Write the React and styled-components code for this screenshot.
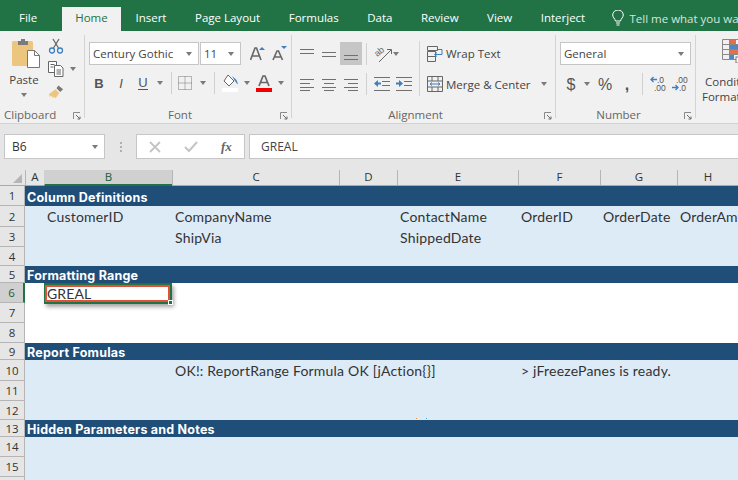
import styled, { createGlobalStyle } from "styled-components";

const GlobalStyle = createGlobalStyle`
  html, body {
    margin: 0;
    padding: 0;
    height: 100%;
    overflow: hidden;
    background: #e6e6e6;
    font-family: "Open Sans", "Liberation Sans", sans-serif;
  }
  * { box-sizing: border-box; }
`;

const Page = styled.div`
  width: 738px;
  height: 480px;
  overflow: hidden;
`;

const TabBar = styled.div`
  height: 31px;
  background: #217346;
  display: flex;
  align-items: flex-end;
  padding-left: 5px;
  white-space: nowrap;
`;

const Tab = styled.div`
  height: 24px;
  padding: 0 ${(p) => p.$pad || 14.25}px;
  line-height: 22px;
  font-size: 11.5px;
  color: ${(p) => (p.$active ? "#217346" : "#fff")};
  background: ${(p) => (p.$active ? "#f1f1f1" : "transparent")};
  margin-left: ${(p) => p.$ml || 0}px;
`;

const TellMe = styled.div`
  display: flex;
  align-items: center;
  gap: 5px;
  height: 24px;
  margin-left: 13px;
  font-size: 11.5px;
  color: #d5e6dc;
  padding-bottom: 2px;
`;

const Ribbon = styled.div`
  height: 93px;
  background: #f1f1f1;
  border-bottom: 1px solid #d2d2d2;
  display: flex;
  padding: 4px 0 5px;
  overflow: hidden;
`;

const Group = styled.div`
  position: relative;
  flex: none;
  width: ${(p) => p.$w}px;
  padding-left: ${(p) => (p.$last ? 0 : 4)}px;
  display: flex;
  flex-direction: column;
  border-right: ${(p) => (p.$last ? "none" : "1px solid #d4d4d4")};
`;

const GroupBody = styled.div`
  display: flex;
  margin-top: 7px;
`;

const GroupLabel = styled.div`
  margin-top: auto;
  margin-bottom: -5px;
  height: 16px;
  line-height: 16px;
  text-align: center;
  font-size: 11.5px;
  color: #666;
  padding-right: ${(p) => p.$pr || 0}px;
`;

const Launcher = styled.svg`
  position: absolute;
  right: 3px;
  bottom: -2px;
  width: 8px;
  height: 8px;
`;

const Column = styled.div`
  display: flex;
  flex-direction: column;
  margin-top: ${(p) => p.$mt || 0}px;
`;

const ToolRow = styled.div`
  display: flex;
  align-items: center;
  height: ${(p) => p.$h || 23}px;
  margin-bottom: ${(p) => p.$mb || 0}px;
`;

const Tool = styled.div`
  flex: none;
  width: ${(p) => p.$w}px;
  height: ${(p) => p.$h || 20}px;
  margin-left: ${(p) => p.$ml || 0}px;
  display: flex;
  align-items: center;
  justify-content: center;
  background: ${(p) => (p.$on ? "#c6c6c6" : "transparent")};
`;

const Caret = styled.span`
  display: block;
  flex: none;
  width: 0;
  height: 0;
  margin-top: ${(p) => p.$mt || 0}px;
  border-left: 3.5px solid transparent;
  border-right: 3.5px solid transparent;
  border-top: 4px solid #7a7a7a;
`;

const ToolSep = styled.div`
  flex: none;
  width: 1px;
  height: 22px;
  margin-left: ${(p) => p.$ml || 0}px;
  background: #d0d0d0;
`;

const ColumnSep = styled.div`
  flex: none;
  width: 1px;
  height: 55px;
  margin: -1px 7px 0 ${(p) => p.$ml || 0}px;
  background: #d4d4d4;
`;

const Combo = styled.div`
  flex: none;
  width: ${(p) => p.$w}px;
  height: 23px;
  margin-left: ${(p) => p.$ml || 0}px;
  background: #fff;
  border: 1px solid #c6c6c6;
  display: flex;
  align-items: center;
  justify-content: space-between;
  padding: 0 6px 0 3px;
  font-size: 11.5px;
  color: #444;
`;

const WrapLabel = styled.span`
  font-size: 11.5px;
  color: #444;
  margin-left: 3px;
  white-space: nowrap;
`;

const BigButton = styled.div`
  flex: none;
  width: 40px;
  display: flex;
  flex-direction: column;
  align-items: center;
  font-size: 11.5px;
  color: #444;
  line-height: 16px;
  svg {
    margin: -4px 0 4px 4px;
  }
`;

const CondLine = styled.div`
  font-size: 11.5px;
  line-height: 15px;
  color: #444;
  white-space: nowrap;
  margin-left: ${(p) => p.$ml}px;
  margin-top: ${(p) => p.$mt || 0}px;
`;

const FormulaRow = styled.div`
  height: 46px;
  display: flex;
  align-items: flex-start;
  padding-top: 10px;
  background: #e6e6e6;
`;

const NameBox = styled.div`
  width: 101px;
  height: 25px;
  margin-left: 4px;
  background: #fff;
  border: 1px solid #c6c6c6;
  display: flex;
  align-items: center;
  justify-content: space-between;
  padding: 0 6px 0 7px;
  font-size: 12px;
  color: #333;
`;

const Dots = styled.div`
  width: 31px;
  height: 25px;
  display: flex;
  flex-direction: column;
  align-items: center;
  justify-content: center;
  gap: 2px;
  span {
    width: 2px;
    height: 2px;
    background: #b0b0b0;
  }
`;

const FxBox = styled.div`
  width: 109px;
  height: 25px;
  background: #fff;
  border: 1px solid #c6c6c6;
  display: flex;
  align-items: center;
  padding-left: 12px;
  gap: 23px;
`;

const FxLabel = styled.span`
  font-family: "Liberation Serif", serif;
  font-style: italic;
  font-weight: 700;
  font-size: 13px;
  color: #666;
`;

const FormulaInput = styled.div`
  flex: 1;
  height: 25px;
  margin-left: 4px;
  background: #fff;
  border: 1px solid #c6c6c6;
  border-right: none;
  padding-left: 11px;
  line-height: 23px;
  font-size: 12px;
  color: #444;
`;

const Sheet = styled.div`
  display: grid;
  grid-template-columns: 25px 19px 128px 167px 58px 121px 82px 77px 61px;
  grid-template-rows: 16px 20px 21px 20px 19px 17px 20px 20px 20px 17px 21px 20px 19px 17px 20px 20px 20px;
  background: #fff;
`;

const Corner = styled.div`
  background: #e6e6e6;
  border-bottom: 1px solid #a9a9a9;
  display: flex;
  align-items: flex-end;
  justify-content: flex-end;
  padding: 0 3px 2px 0;
`;

const ColHead = styled.div`
  background: ${(p) => (p.$active ? "#d0d0d0" : "#e6e6e6")};
  border-left: 1px solid ${(p) => (p.$active ? "#d0d0d0" : "#b5b5b5")};
  border-bottom: ${(p) => (p.$active ? "2px solid #217346" : "1px solid #a9a9a9")};
  text-align: center;
  font-size: 11.5px;
  line-height: 14px;
  color: ${(p) => (p.$active ? "#1d5c3a" : "#333")};
`;

const RowHead = styled.div`
  grid-column: 1;
  background: ${(p) => (p.$active ? "#d0d0d0" : "#e6e6e6")};
  border-right: ${(p) => (p.$active ? "2px solid #217346" : "1px solid #b5b5b5")};
  border-bottom: 1px solid #b5b5b5;
  display: flex;
  align-items: center;
  justify-content: center;
  font-size: 11.5px;
  color: ${(p) => (p.$active ? "#1d5c3a" : "#333")};
`;

const Band = styled.div`
  grid-column: 2 / -1;
  background: #1f4e79;
  color: #fff;
  font-family: Inter, "DejaVu Sans", sans-serif;
  font-weight: 700;
  font-size: 12.5px;
  letter-spacing: 0.22px;
  line-height: ${(p) => p.$lh || 19}px;
  padding-left: 2px;
  white-space: nowrap;
`;

const BlueRow = styled.div`
  grid-column: 2 / -1;
  background: #ddebf7;
  display: grid;
  grid-template-columns: subgrid;
  position: relative;
`;

const WhiteRow = styled(BlueRow)`
  background: #fff;
`;

const Cell = styled.div`
  grid-column: ${(p) => p.$col};
  padding-left: 3px;
  font-family: Lato, Inter, sans-serif;
  font-size: 14px;
  letter-spacing: 0.2px;
  line-height: 22px;
  color: #333;
  white-space: nowrap;
`;

const SelectedCell = styled.div`
  grid-column: 2;
  position: relative;
  z-index: 2;
  height: 21px;
  border: 2px solid #217346;
  box-shadow: 2px 3px 4px rgba(0, 0, 0, 0.35);
  background: #fff;
`;

const SelectedInner = styled.div`
  height: 17px;
  border: 2px solid #e0503a;
  margin-left: -1px;
  font-family: Lato, Inter, sans-serif;
  font-size: 14px;
  letter-spacing: 0.1px;
  line-height: 14px;
  color: #333;
`;

const FillHandle = styled.span`
  position: absolute;
  right: -3px;
  bottom: -3px;
  width: 5px;
  height: 5px;
  background: #217346;
  border: 1px solid #fff;
`;

const Speck = styled.span`
  position: absolute;
  left: ${(p) => p.$x}px;
  bottom: 1px;
  width: 1px;
  height: 1px;
  background: ${(p) => p.$c};
`;

const Letter = styled.span`
  font-family: "Liberation Sans", sans-serif;
  font-size: ${(p) => p.$size || 13}px;
  color: #555;
  font-weight: ${(p) => (p.$bold ? 700 : 400)};
  font-style: ${(p) => (p.$italic ? "italic" : "normal")};
  border-bottom: ${(p) => (p.$under ? "1.5px solid #555" : "none")};
  line-height: 13px;
`;

/* ---- ribbon drawings ---- */

const LauncherIcon = () => (
  <Launcher viewBox="0 0 8 8" fill="none" stroke="#8a8a8a">
    <path d="M.5 7V.5H7" />
    <path d="M3 3l4 4M7 4.500V7H4.500" stroke="#6a6a6a" />
  </Launcher>
);

const PasteIcon = () => (
  <svg width="29" height="30" viewBox="0 0 29 30">
    <rect x="0" y="3" width="21" height="25" rx="1.5" fill="#ecc67f" />
    <path d="M6 3h3V1h4v2h3v4H6z" fill="#7b7b7b" />
    <path d="M15.500 12.500h7l5 5v12h-12z" fill="#fff" stroke="#777" />
    <path d="M22.500 12.500v5h5" fill="none" stroke="#777" />
  </svg>
);

const ScissorsIcon = () => (
  <svg width="16" height="16" viewBox="0 0 16 16" fill="none">
    <path d="M5 1l5.500 9M11 1l-5.500 9" stroke="#666" strokeWidth="1.3" />
    <circle cx="4" cy="12.500" r="2.500" stroke="#3f7fbf" strokeWidth="1.3" />
    <circle cx="12" cy="12.500" r="2.500" stroke="#3f7fbf" strokeWidth="1.3" />
  </svg>
);

const CopyIcon = () => (
  <svg width="16" height="16" viewBox="0 0 16 16" fill="#fff" stroke="#666">
    <path d="M.5.500h8v11h-8z" />
    <path d="M6.500 4.500h6l2.500 2.500v8.500h-8.500z" />
    <path d="M2.500 3.500h4M2.500 6h3M8.500 9h4.500M8.500 11h4.500M8.500 13h4.500" fill="none" />
  </svg>
);

const BrushIcon = () => (
  <svg width="17" height="16" viewBox="0 0 17 16">
    <path d="M11 1l5 4-3 3-4-4z" fill="#777" />
    <path d="M1 10l7-5 4 4-4 6-1.500-2-1.500 1.500L4 12l-2 1z" fill="#ecc67f" />
  </svg>
);

const GrowIcon = ({ small }) => (
  <svg width="15" height="15" viewBox="0 0 15 15">
    <path
      d={small ? "M1 14L5 5h1.500l4 9M3 11h5.500" : "M.5 14L5 2h1.500l4.500 12M2.500 10h6.500"}
      fill="none"
      stroke="#666"
      strokeWidth="1.6"
    />
    <path d={small ? "M9 0h6l-3 3z" : "M9 4l3-3 3 3z"} fill="#3f7fbf" />
  </svg>
);

const BordersIcon = () => (
  <svg width="14" height="14" viewBox="0 0 14 14" fill="none" stroke="#777" strokeDasharray="1 1">
    <path d="M.5.500h13v13H.5zM7 .5v13M.5 7h13" />
  </svg>
);

const FillIcon = () => (
  <svg width="17" height="18" viewBox="0 0 17 18">
    <path d="M6 1l6 6-5 5-5-5z" fill="#fff" stroke="#666" />
    <path d="M10 2l3.500 3c1.500 1.500 2.500 4 2 5.500L13 7z" fill="#3f7fbf" />
    <rect x="0" y="14" width="16" height="4" fill="#fff" />
  </svg>
);

const FontColorIcon = () => (
  <svg width="16" height="18" viewBox="0 0 16 18">
    <path d="M3 12L7 2h2l4 10M4.500 8.500h7" fill="none" stroke="#666" strokeWidth="1.7" />
    <rect x="0" y="14" width="16" height="4" fill="#f00000" />
  </svg>
);

const Lines = ({ rows, w = 14 }) => (
  <svg width={w} height="16" viewBox={`0 0 ${w} 16`} fill="none" stroke="#707070">
    {rows.map(([y, a, b]) => (
      <path key={y} d={`M${a} ${y}.5H${b}`} />
    ))}
  </svg>
);

const OrientationIcon = () => (
  <svg width="18" height="18" viewBox="0 0 18 18" fill="none" stroke="#666" overflow="visible">
    <text
      x="1"
      y="10"
      fontSize="9"
      fontFamily="Liberation Sans"
      fill="#666"
      stroke="none"
      transform="rotate(-40 5 8)"
    >
      ab
    </text>
    <path d="M5 17L17 5M13 4.500h4.500V9" />
  </svg>
);

const IndentIcon = ({ flip }) => (
  <svg width="16" height="14" viewBox="0 0 16 14">
    <path d="M0 .5h16M8 4.500h8M8 8.500h8M0 13.500h16" stroke="#707070" />
    <path d={flip ? "M0 5.500h3V3l4 3.500-4 3.500V7.500H0z" : "M7 5.500H4V3L0 6.500 4 10V7.500h3z"} fill="#3f7fbf" />
  </svg>
);

const WrapIcon = () => (
  <svg width="16" height="16" viewBox="0 0 16 16" fill="none">
    <path d="M.5.500h10v4H.5zM.5 5.500h8v5H.5zM.5 10.500h8v5H.5z" stroke="#666" />
    <path d="M11 3.500h4v5h-7M10 6.500l-2.500 2 2.500 2" stroke="#3f7fbf" />
  </svg>
);

const MergeIcon = () => (
  <svg width="16" height="16" viewBox="0 0 16 16" fill="none">
    <path d="M.5.500h15v15H.5zM.5 5h15M.5 11h15M5 .5V5M11 .5V5M5 11v4.500M11 11v4.500" stroke="#666" />
    <path d="M3 8h10M5 6.500L3 8l2 1.500M11 6.500L13 8l-2 1.500" stroke="#3f7fbf" />
  </svg>
);

const DecimalIcon = ({ more }) => (
  <svg width="16" height="16" viewBox="0 0 16 16">
    <text x={more ? 4 : 7} y="7" fontSize="8.5" fontFamily="Liberation Sans" fill="#555">
      {more ? ".00" : ".0"}
    </text>
    <text x={more ? 7 : 4} y="15" fontSize="8.5" fontFamily="Liberation Sans" fill="#555">
      {more ? ".0" : ".00"}
    </text>
    <path
      d={more ? "M0 11.500h6M3.500 9l2.500 2.500-2.500 2.500" : "M7 3.500H1M3.500 1L1 3.500 3.500 6"}
      stroke="#3f7fbf"
      strokeWidth="1.3"
      fill="none"
    />
  </svg>
);

const CondFormatIcon = () => (
  <svg width="16" height="24" viewBox="0 0 16 24">
    <path d="M.5.500h16v20H.5zM.5 5.500h16M.5 10.500h16M.5 15.500h16M7.500.5v20" fill="none" stroke="#888" />
    <rect x="8" y="1" width="6" height="4" fill="#e2704a" />
    <rect x="8" y="6" width="8" height="4" fill="#4f87c5" />
    <rect x="8" y="11" width="8" height="4" fill="#e2704a" />
    <rect x="8" y="16" width="4" height="4" fill="#4f87c5" />
    <rect x="14" y="18" width="3" height="6" fill="#fff" stroke="#777" />
  </svg>
);

const Bulb = () => (
  <svg width="12" height="16" viewBox="0 0 12 16" fill="none" stroke="#fff">
    <path d="M3.500 11C3 8.500.7 7.500.7 5a5.300 5 0 0 1 10.600 0C11.300 7.500 9 8.500 8.500 11zM4 13h4M4.500 15h3" />
  </svg>
);

const CrossIcon = () => (
  <svg width="12" height="12" viewBox="0 0 12 12" stroke="#c4c4c4" strokeWidth="1.8">
    <path d="M1 1l10 10M11 1L1 11" />
  </svg>
);

const CheckIcon = () => (
  <svg width="14" height="12" viewBox="0 0 14 12" fill="none" stroke="#c4c4c4" strokeWidth="2">
    <path d="M1 6l4 4 8-9" />
  </svg>
);

const tabs = ["Insert", "Page Layout", "Formulas", "Data", "Review", "View", "Interject"];
const columns = ["B", "C", "D", "E", "F", "G", "H"];

const Ribbons = () => (
  <Ribbon>
    <Group $w={85}>
      <GroupBody>
        <BigButton>
          <PasteIcon />
          <span>Paste</span>
          <Caret $mt={5} />
        </BigButton>
        <Column $mt={-8}>
          <ToolRow>
            <Tool $w={16} $ml={4}>
              <ScissorsIcon />
            </Tool>
          </ToolRow>
          <ToolRow>
            <Tool $w={16} $ml={4}>
              <CopyIcon />
            </Tool>
            <Tool $w={18}>
              <Caret />
            </Tool>
          </ToolRow>
          <ToolRow>
            <Tool $w={16} $ml={4}>
              <BrushIcon />
            </Tool>
          </ToolRow>
        </Column>
      </GroupBody>
      <GroupLabel $pr={28}>Clipboard</GroupLabel>
      <LauncherIcon />
    </Group>

    <Group $w={207}>
      <GroupBody>
        <Column>
          <ToolRow $mb={7}>
            <Combo $w={110}>
              Century Gothic
              <Caret />
            </Combo>
            <Combo $w={41} $ml={1}>
              11
              <Caret />
            </Combo>
            <Tool $w={16} $ml={8}>
              <GrowIcon />
            </Tool>
            <Tool $w={15} $ml={7}>
              <GrowIcon small />
            </Tool>
          </ToolRow>
          <ToolRow $h={22}>
            <Tool $w={20}>
              <Letter $bold>B</Letter>
            </Tool>
            <Tool $w={24}>
              <Letter $italic>I</Letter>
            </Tool>
            <Tool $w={20}>
              <Letter $under>U</Letter>
            </Tool>
            <Tool $w={14}>
              <Caret />
            </Tool>
            <ToolSep $ml={4} />
            <Tool $w={26}>
              <BordersIcon />
            </Tool>
            <Tool $w={10}>
              <Caret />
            </Tool>
            <ToolSep $ml={6} />
            <Tool $w={30}>
              <FillIcon />
            </Tool>
            <Tool $w={4}>
              <Caret />
            </Tool>
            <Tool $w={30}>
              <FontColorIcon />
            </Tool>
            <Tool $w={4}>
              <Caret />
            </Tool>
          </ToolRow>
        </Column>
      </GroupBody>
      <GroupLabel $pr={20}>Font</GroupLabel>
      <LauncherIcon />
    </Group>

    <Group $w={264}>
      <GroupBody>
        <Column>
          <ToolRow $mb={8}>
            <Tool $w={22}>
              <Lines rows={[[3, 0, 14], [7, 0, 14]]} />
            </Tool>
            <Tool $w={22}>
              <Lines rows={[[6, 0, 14], [10, 0, 14]]} />
            </Tool>
            <Tool $w={22} $h={23} $on>
              <Lines rows={[[9, 0, 14], [13, 0, 14]]} />
            </Tool>
            <ToolSep $ml={4} />
            <Tool $w={18} $ml={7}>
              <OrientationIcon />
            </Tool>
            <Tool $w={8}>
              <Caret />
            </Tool>
          </ToolRow>
          <ToolRow $h={22}>
            <Tool $w={22}>
              <Lines rows={[[3, 0, 14], [7, 0, 10], [11, 0, 14], [14, 0, 10]]} />
            </Tool>
            <Tool $w={22}>
              <Lines rows={[[3, 0, 14], [7, 2, 12], [11, 0, 14], [14, 2, 12]]} />
            </Tool>
            <Tool $w={22}>
              <Lines rows={[[3, 0, 14], [7, 4, 14], [11, 0, 14], [14, 4, 14]]} />
            </Tool>
            <ToolSep $ml={4} />
            <Tool $w={16} $ml={7}>
              <IndentIcon />
            </Tool>
            <Tool $w={16} $ml={6}>
              <IndentIcon flip />
            </Tool>
          </ToolRow>
        </Column>
        <ColumnSep $ml={7} />
        <Column>
          <ToolRow $mb={8}>
            <WrapIcon />
            <WrapLabel>Wrap Text</WrapLabel>
          </ToolRow>
          <ToolRow $h={22}>
            <MergeIcon />
            <WrapLabel>Merge &amp; Center</WrapLabel>
            <Tool $w={7} $ml={10}>
              <Caret />
            </Tool>
          </ToolRow>
        </Column>
      </GroupBody>
      <GroupLabel $pr={20}>Alignment</GroupLabel>
      <LauncherIcon />
    </Group>

    <Group $w={140}>
      <GroupBody>
        <Column>
          <ToolRow $mb={8}>
            <Combo $w={131}>
              General
              <Caret />
            </Combo>
          </ToolRow>
          <ToolRow $h={22}>
            <Tool $w={22}>
              <Letter $size={16}>$</Letter>
            </Tool>
            <Tool $w={10}>
              <Caret />
            </Tool>
            <Tool $w={26}>
              <Letter $size={16}>%</Letter>
            </Tool>
            <Tool $w={18}>
              <Letter $bold $size={16}>,</Letter>
            </Tool>
            <ToolSep $ml={6} />
            <Tool $w={16} $ml={7}>
              <DecimalIcon />
            </Tool>
            <Tool $w={16} $ml={6}>
              <DecimalIcon more />
            </Tool>
          </ToolRow>
        </Column>
      </GroupBody>
      <GroupLabel $pr={18}>Number</GroupLabel>
      <LauncherIcon />
    </Group>

    <Group $w={70} $last>
      <Column $mt={4}>
        <CondLine $ml={26}>
          <CondFormatIcon />
        </CondLine>
        <CondLine $ml={9} $mt={8}>
          Conditional
        </CondLine>
        <CondLine $ml={6}>Formatting</CondLine>
      </Column>
    </Group>
  </Ribbon>
);

const App = () => (
  <Page>
    <GlobalStyle />
    <TabBar>
      <Tab $pad={14}>File</Tab>
      <Tab $active $pad={13.5} $ml={10.5}>
        Home
      </Tab>
      {tabs.map((t) => (
        <Tab key={t}>{t}</Tab>
      ))}
      <TellMe>
        <Bulb />
        <span>Tell me what you want to do</span>
      </TellMe>
    </TabBar>

    <Ribbons />

    <FormulaRow>
      <NameBox>
        B6
        <Caret />
      </NameBox>
      <Dots>
        <span />
        <span />
        <span />
      </Dots>
      <FxBox>
        <CrossIcon />
        <CheckIcon />
        <FxLabel>fx</FxLabel>
      </FxBox>
      <FormulaInput>GREAL</FormulaInput>
    </FormulaRow>

    <Sheet>
      <Corner>
        <svg width="9" height="9" viewBox="0 0 9 9">
          <path d="M9 0v9H0z" fill="#b5b5b5" />
        </svg>
      </Corner>
      <ColHead>A</ColHead>
      {columns.map((c) => (
        <ColHead key={c} $active={c === "B"}>
          {c}
        </ColHead>
      ))}

      <RowHead>1</RowHead>
      <Band $lh={23}>Column Definitions</Band>

      <RowHead>2</RowHead>
      <BlueRow>
        <Cell $col={2}>CustomerID</Cell>
        <Cell $col={3}>CompanyName</Cell>
        <Cell $col={5}>ContactName</Cell>
        <Cell $col={6}>OrderID</Cell>
        <Cell $col={7}>OrderDate</Cell>
        <Cell $col={8}>OrderAmt</Cell>
      </BlueRow>

      <RowHead>3</RowHead>
      <BlueRow>
        <Cell $col={3}>ShipVia</Cell>
        <Cell $col={5}>ShippedDate</Cell>
      </BlueRow>

      <RowHead>4</RowHead>
      <BlueRow />

      <RowHead>5</RowHead>
      <Band>Formatting Range</Band>

      <RowHead $active>6</RowHead>
      <WhiteRow>
        <SelectedCell>
          <SelectedInner>GREAL</SelectedInner>
          <FillHandle />
        </SelectedCell>
      </WhiteRow>

      <RowHead>7</RowHead>
      <WhiteRow />

      <RowHead>8</RowHead>
      <WhiteRow />

      <RowHead>9</RowHead>
      <Band>Report Fomulas</Band>

      <RowHead>10</RowHead>
      <BlueRow>
        <Cell $col={3}>OK!: ReportRange Formula OK [jAction{"{}"}]</Cell>
        <Cell $col={6}>&gt; jFreezePanes is ready.</Cell>
      </BlueRow>

      <RowHead>11</RowHead>
      <BlueRow />

      <RowHead>12</RowHead>
      <BlueRow>
        <Speck $x={391} $c="#e08a3c" />
        <Speck $x={401} $c="#4aa8e0" />
      </BlueRow>

      <RowHead>13</RowHead>
      <Band>Hidden Parameters and Notes</Band>

      <RowHead>14</RowHead>
      <BlueRow />

      <RowHead>15</RowHead>
      <BlueRow />

      <RowHead>16</RowHead>
      <BlueRow />
    </Sheet>
  </Page>
);

export default App;
